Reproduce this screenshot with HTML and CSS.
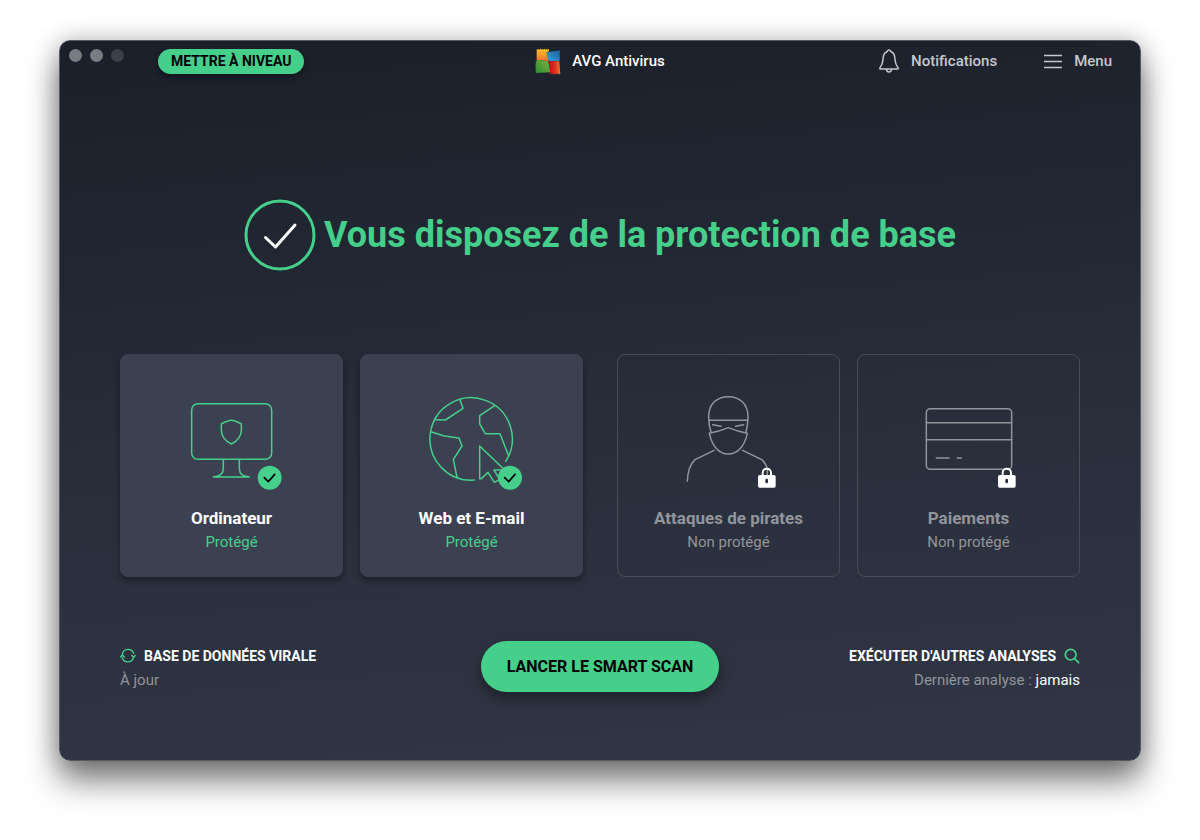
FILE: index.html
```html
<!DOCTYPE html>
<html lang="fr">
<head>
<meta charset="utf-8">
<meta name="viewport" content="width=device-width, initial-scale=1">
<title>AVG Antivirus</title>
<link rel="stylesheet" href="styles.css">
</head>
<body>
<div class="window">
  <header class="titlebar">
    <div class="titlebar-left">
      <div class="lights">
        <button class="light" aria-label="Fermer"></button>
        <button class="light" aria-label="Réduire"></button>
        <button class="light light-off" aria-label="Agrandir"></button>
      </div>
      <button class="upgrade">METTRE À NIVEAU</button>
    </div>
    <div class="brand">
      <svg class="brand-logo" viewBox="43 37 78 81" aria-hidden="true">
        <defs>
          <linearGradient id="lo" x1="0" y1="0" x2="0" y2="1"><stop offset="0" stop-color="#ffc02e"/><stop offset="1" stop-color="#f0702c"/></linearGradient>
          <linearGradient id="lb" x1="1" y1="0" x2="0" y2="1"><stop offset="0" stop-color="#1a5c9c"/><stop offset="1" stop-color="#36a4e0"/></linearGradient>
          <linearGradient id="lg" x1="0" y1="1" x2="1" y2="0"><stop offset="0" stop-color="#2c8a38"/><stop offset="1" stop-color="#7ab63c"/></linearGradient>
          <linearGradient id="lr" x1="0" y1="0" x2="1" y2="0"><stop offset="0" stop-color="#b80f22"/><stop offset=".5" stop-color="#d82820"/><stop offset="1" stop-color="#f2702a"/></linearGradient>
        </defs>
        <path fill="url(#lo)" d="M48 40l4 2 2-3 3 3 3-3 3 3 3-3 3 3 3-3 3 3 3-3 3 3 4-2v7l-7 3 6 26-36-3z"/>
        <path fill="url(#lb)" d="M77 50l42-6-2 5 2 3-3 3 3 3-3 3 3 3-3 3 3 3-3 3 1 4-33-1z"/>
        <path fill="url(#lg)" d="M48 72l35 5 6 33-41 2-4-3 3-3-4-3 4-4-4-3 4-4-4-4 4-4-3-4 4-4z"/>
        <path fill="url(#lr)" d="M83 77h33l3 38-5 1-3-3-3 4-4-4-3 4-4-4-3 4-4-4-4 3-5-1 8-2z"/>
      </svg>
      <span>AVG Antivirus</span>
    </div>
    <nav class="titlebar-right">
      <button class="nav-button">
        <svg class="nav-icon" viewBox="0 0 22 26" aria-hidden="true">
          <path d="M11 2C9.700 2 9.400 3 9 3.700 5.800 4.800 5.100 8 5 11.500 4.800 15.300 4 17 2 19.600c-.4.700-.1 1.400.7 1.400h16.600c.8 0 1.100-.7.700-1.400-2-2.600-2.800-4.300-3-8.100-.1-3.500-.8-6.700-4-7.800C12.600 3 12.300 2 11 2zM8.500 21c0 1.800 1 3 2.500 3s2.500-1.200 2.500-3"/>
        </svg>
        <span>Notifications</span>
      </button>
      <button class="nav-button">
        <svg class="nav-icon nav-icon-menu" viewBox="0 0 20 26" aria-hidden="true">
          <path d="M1 7.500h18M1 13.500h18M1 19.500h18"/>
        </svg>
        <span>Menu</span>
      </button>
    </nav>
  </header>

  <main class="content">
    <section class="status">
      <svg class="status-icon" viewBox="0 0 72 72" aria-hidden="true">
        <circle cx="36" cy="36" r="34" fill="none" stroke="#46cf8b" stroke-width="3"/>
        <path d="M21.500 38.500l10 9.500L51 26" fill="none" stroke="#fff" stroke-width="3" stroke-linecap="round" stroke-linejoin="round"/>
      </svg>
      <h1 class="status-title">Vous disposez de la protection de base</h1>
    </section>

    <section class="shields">
      <div class="shield-group">
        <button class="tile tile-on">
          <svg class="tile-icon" viewBox="187 145 360 300" aria-hidden="true">
            <g class="line">
              <rect x="246" y="177" width="240" height="167" rx="19"/>
              <path d="M365 227c-9 0-17 4-30 11v18c0 17 12 33 30 42 18-9 30-25 30-42v-18c-13-7-21-11-30-11zM341 344v26c0 14-7 23-20 25l-10 2h108l-10-2c-13-2-20-11-20-25v-26"/>
            </g>
            <circle cx="480" cy="399" r="36" fill="#46cf8b"/>
            <path class="tick" d="M464 399l12 12 19-22"/>
          </svg>
          <span class="tile-title">Ordinateur</span>
          <span class="tile-state">Protégé</span>
        </button>
        <button class="tile tile-on">
          <svg class="tile-icon" viewBox="171 145 360 300" aria-hidden="true">
            <g class="line">
              <path d="M358 406A123.500 123.500 0 1 1 452 350"/>
              <path d="M315 166l9 25-53 35-29-1M230 262l38 12 44 6 9 24-26 41 11 53M419 183l-45 30v25l17 29h44l26 67"/>
              <path d="M374 304v98h5l20-19 19 30 16-9-17-28h32z"/>
            </g>
            <circle cx="465" cy="399" r="36" fill="#46cf8b"/>
            <path class="tick" d="M449 399l12 12 19-22"/>
          </svg>
          <span class="tile-title">Web et E-mail</span>
          <span class="tile-state">Protégé</span>
        </button>
      </div>
      <div class="shield-group">
        <button class="tile tile-off">
          <svg class="tile-icon" viewBox="178 145 360 300" aria-hidden="true">
            <g class="line">
              <path d="M304 262c-5-15-7-30-7-45 0-38 23-61 59-61s59 23 59 61c0 15-2 30-6 45M298 227h117M309 240l25 5M402 240l-24 5M299 266c22-4 40-10 57-17 17 7 35 13 57 17-8 38-29 62-57 62s-49-24-57-62z"/>
              <path d="M313 317l-57 28c-14 13-22 38-23 65M399 317l57 28c9 7 14 17 17 28v18"/>
            </g>
            <path class="lock-arch" d="M459 394v-9c0-17 25-17 25 0v9"/>
            <path class="lock-body" fill-rule="evenodd" d="M450 391h43q5 0 5 5v28q0 5-5 5h-43q-5 0-5-5v-28q0-5 5-5zM471 402c-3 0-4 2-4 4v6c0 5 8 5 8 0v-6c0-2-1-4-4-4z"/>
          </svg>
          <span class="tile-title">Attaques de pirates</span>
          <span class="tile-state">Non protégé</span>
        </button>
        <button class="tile tile-off">
          <svg class="tile-icon" viewBox="178 145 360 300" aria-hidden="true">
            <g class="line">
              <rect x="230" y="192" width="256" height="182" rx="12"/>
              <path d="M230 234h256M230 285h256M260 340h38M323 340h12"/>
            </g>
            <path class="lock-arch" d="M459 394v-9c0-17 25-17 25 0v9"/>
            <path class="lock-body" fill-rule="evenodd" d="M450 391h43q5 0 5 5v28q0 5-5 5h-43q-5 0-5-5v-28q0-5 5-5zM471 402c-3 0-4 2-4 4v6c0 5 8 5 8 0v-6c0-2-1-4-4-4z"/>
          </svg>
          <span class="tile-title">Paiements</span>
          <span class="tile-state">Non protégé</span>
        </button>
      </div>
    </section>

    <footer class="actions">
      <div class="action">
        <button class="action-link">
          <svg class="action-icon" viewBox="32 53 48 48" aria-hidden="true">
            <g fill="none" stroke="#46cf8b" stroke-width="4" stroke-linecap="round" stroke-linejoin="round">
              <path d="M39 74c1-20 27-23 34-5M73 79c-3 19-28 21-34 4"/>
              <path d="M34 80l5-6 6 6M67 75l6 6 5-6"/>
            </g>
          </svg>
          <span>BASE DE DONNÉES VIRALE</span>
        </button>
        <p class="action-note">À jour</p>
      </div>
      <button class="scan">LANCER LE SMART SCAN</button>
      <div class="action action-end">
        <button class="action-link">
          <span>EXÉCUTER D'AUTRES ANALYSES</span>
          <svg class="action-icon" viewBox="671 54 48 48" aria-hidden="true">
            <g fill="none" stroke="#46cf8b" stroke-width="5" stroke-linecap="round">
              <circle cx="691" cy="74" r="16"/>
              <path d="M703 86l12 12"/>
            </g>
          </svg>
        </button>
        <p class="action-note">Dernière analyse : <span class="action-value">jamais</span></p>
      </div>
    </footer>
  </main>
</div>
</body>
</html>
```
FILE: styles.css
```css
* {
  box-sizing: border-box;
}

body {
  margin: 0;
  min-height: 100vh;
  padding: 40px 59px 79px;
  display: flex;
  background: #fff;
  font-family: Roboto, "Liberation Sans", sans-serif;
  font-size: 16px;
  line-height: 24px;
  color: #fff;
}

button {
  margin: 0;
  padding: 0;
  border: 0;
  background: none;
  color: inherit;
  font: inherit;
  cursor: pointer;
}

.window {
  flex: 1;
  display: flex;
  flex-direction: column;
  border: 1px solid #555a62;
  border-radius: 11px;
  background: linear-gradient(175deg, #1b1f2a 0%, #222833 32%, #2a303d 65%, #303645 100%);
  box-shadow: 0 20px 32px rgba(0, 0, 0, 0.5), 0 0 24px rgba(0, 0, 0, 0.24);
}

.titlebar {
  display: grid;
  grid-template-columns: 1fr auto 1fr;
  align-items: center;
  height: 40px;
  padding: 0 9px;
}

.titlebar-left {
  display: flex;
  align-items: center;
  gap: 34px;
}

.lights {
  display: flex;
  gap: 8px;
  padding-bottom: 11px;
}

.light {
  width: 13px;
  height: 13px;
  border-radius: 50%;
  background: #7a7c82;
}

.light-off {
  background: #3d4049;
}

.upgrade {
  padding: 0 13px;
  border-radius: 13px;
  background: #46cf8b;
  box-shadow: 0 3px 6px rgba(0, 0, 0, 0.4);
  color: #000;
  font-size: 14px;
  font-weight: 700;
  line-height: 25px;
}

.brand {
  display: flex;
  align-items: center;
  gap: 11px;
  font-size: 15px;
  font-weight: 500;
}

.brand-logo {
  width: 26px;
  height: 27px;
}

.titlebar-right {
  display: flex;
  justify-content: flex-end;
  gap: 46px;
  padding-right: 19px;
}

.nav-button {
  display: flex;
  align-items: center;
  gap: 11px;
  color: #c7c8cb;
  font-size: 15px;
  font-weight: 500;
}

.nav-icon {
  width: 22px;
  height: 26px;
  fill: none;
  stroke: #c7c8cb;
  stroke-width: 1.5;
}

.nav-icon-menu {
  width: 20px;
}

.content {
  flex: 1;
  display: flex;
  flex-direction: column;
  padding: 0 60px 68px;
}

.status {
  flex: 1;
  display: flex;
  align-items: center;
  justify-content: center;
  gap: 8px;
  padding: 68px 0 34px;
}

.status-icon {
  width: 72px;
  height: 72px;
}

.status-title {
  margin: 0;
  color: #46cf8b;
  font-size: 36px;
  font-weight: 700;
  line-height: 44px;
}

.shields {
  display: flex;
  gap: 34px;
}

.shield-group {
  flex: 1;
  display: grid;
  grid-template-columns: 1fr 1fr;
  gap: 17px;
}

.tile {
  display: flex;
  flex-direction: column;
  align-items: center;
  padding: 38px 8px 22px;
  border: 1px solid #484c59;
  border-radius: 8px;
  color: #92959c;
}

.tile-on {
  border-color: #3c4152;
  background: #3c4152;
  box-shadow: 0 4px 6px rgba(0, 0, 0, 0.35);
  color: #46cf8b;
}

.tile-icon {
  width: 120px;
  height: 100px;
  margin-bottom: 14px;
}

.tile-title {
  font-size: 17px;
  font-weight: 700;
  line-height: 23px;
}

.tile-on .tile-title {
  color: #fff;
}

.tile-state {
  font-size: 15px;
  line-height: 24px;
}

.line {
  fill: none;
  stroke: currentColor;
  stroke-width: 4.5;
  stroke-linecap: round;
  stroke-linejoin: round;
}

.tick {
  fill: none;
  stroke: #000;
  stroke-width: 5;
  stroke-linecap: round;
  stroke-linejoin: round;
}

.lock-arch {
  fill: none;
  stroke: #fff;
  stroke-width: 6;
}

.lock-body {
  fill: #fff;
}

.actions {
  display: grid;
  grid-template-columns: 1fr auto 1fr;
  align-items: center;
  padding-top: 64px;
}

.action {
  display: flex;
  flex-direction: column;
  align-items: flex-start;
  padding-top: 3px;
}

.action-end {
  align-items: flex-end;
}

.action-link {
  display: flex;
  align-items: center;
  gap: 8px;
  font-size: 14px;
  font-weight: 700;
  line-height: 24px;
}

.action-icon {
  width: 16px;
  height: 16px;
}

.action-note {
  margin: 0;
  color: #92959c;
  font-size: 15px;
}

.action-value {
  color: #fff;
}

.scan {
  padding: 0 26px;
  border-radius: 26px;
  background: #46cf8b;
  box-shadow: 0 6px 14px rgba(0, 0, 0, 0.4);
  color: #000;
  font-size: 16px;
  font-weight: 700;
  line-height: 51px;
}
```
